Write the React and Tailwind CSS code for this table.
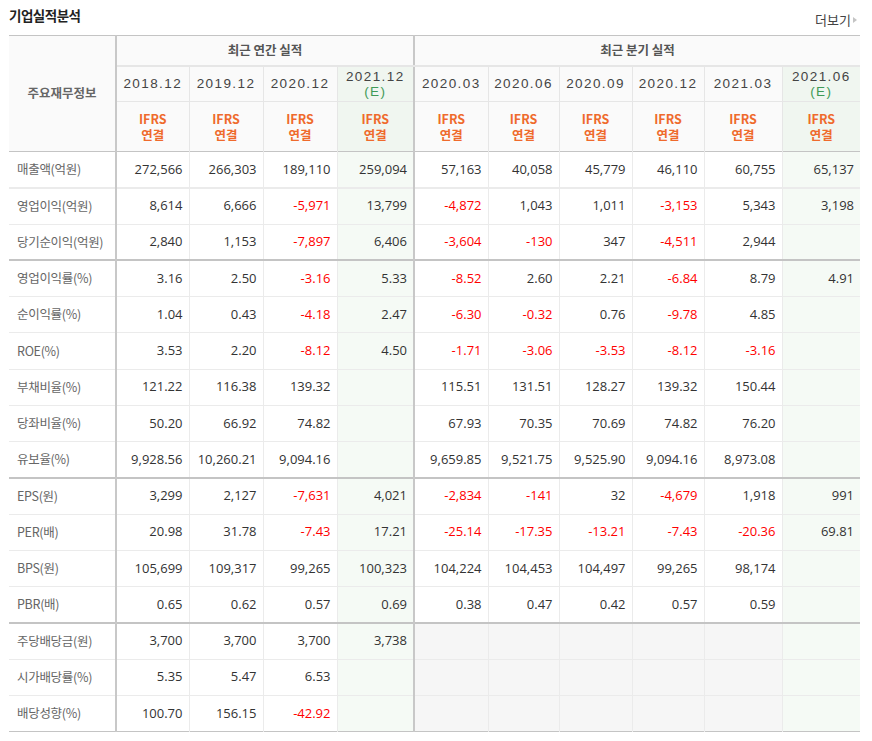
import React from 'react';

const annual = ['2018.12', '2019.12', '2020.12'];
const quarters = ['2020.03', '2020.06', '2020.09', '2020.12', '2021.03'];

// 10 data columns: 4 annual (last is estimate), 6 quarterly (last is estimate)
const rows = [
  ['매출액(억원)', ['272,566', '266,303', '189,110', '259,094', '57,163', '40,058', '45,779', '46,110', '60,755', '65,137']],
  ['영업이익(억원)', ['8,614', '6,666', '-5,971', '13,799', '-4,872', '1,043', '1,011', '-3,153', '5,343', '3,198']],
  ['당기순이익(억원)', ['2,840', '1,153', '-7,897', '6,406', '-3,604', '-130', '347', '-4,511', '2,944', '']],
  ['영업이익률(%)', ['3.16', '2.50', '-3.16', '5.33', '-8.52', '2.60', '2.21', '-6.84', '8.79', '4.91']],
  ['순이익률(%)', ['1.04', '0.43', '-4.18', '2.47', '-6.30', '-0.32', '0.76', '-9.78', '4.85', '']],
  ['ROE(%)', ['3.53', '2.20', '-8.12', '4.50', '-1.71', '-3.06', '-3.53', '-8.12', '-3.16', '']],
  ['부채비율(%)', ['121.22', '116.38', '139.32', '', '115.51', '131.51', '128.27', '139.32', '150.44', '']],
  ['당좌비율(%)', ['50.20', '66.92', '74.82', '', '67.93', '70.35', '70.69', '74.82', '76.20', '']],
  ['유보율(%)', ['9,928.56', '10,260.21', '9,094.16', '', '9,659.85', '9,521.75', '9,525.90', '9,094.16', '8,973.08', '']],
  ['EPS(원)', ['3,299', '2,127', '-7,631', '4,021', '-2,834', '-141', '32', '-4,679', '1,918', '991']],
  ['PER(배)', ['20.98', '31.78', '-7.43', '17.21', '-25.14', '-17.35', '-13.21', '-7.43', '-20.36', '69.81']],
  ['BPS(원)', ['105,699', '109,317', '99,265', '100,323', '104,224', '104,453', '104,497', '99,265', '98,174', '']],
  ['PBR(배)', ['0.65', '0.62', '0.57', '0.69', '0.38', '0.47', '0.42', '0.57', '0.59', '']],
  ['주당배당금(원)', ['3,700', '3,700', '3,700', '3,738', null, null, null, null, null, '']],
  ['시가배당률(%)', ['5.35', '5.47', '6.53', '', null, null, null, null, null, '']],
  ['배당성향(%)', ['100.70', '156.15', '-42.92', '', null, null, null, null, null, '']],
];

const colWidths = [107, 73, 74, 74, 77, 74, 71, 73, 72, 78, 78];

function rowBorder(i) {
  if (i === 0) return 'border-b-2 border-b-[#ebebeb]';
  if (i === 2 || i === 8 || i === 12) return 'border-b-2 border-b-[#c4c4c4]';
  if (i === rows.length - 1) return 'border-b border-b-[#c4c4c4]';
  return 'border-b border-b-[#ebebeb]';
}

function Ifrs() {
  return (
    <div className="text-[12.5px] font-bold leading-[16px] text-[#ef6a2c]">
      IFRS
      <br />
      연결
    </div>
  );
}

function YearCell({ label, estimate }) {
  if (estimate) {
    return (
      <th className="h-[36px] bg-[#f0f6f0] p-0 align-middle font-normal">
        <div className="font-['Liberation_Sans',sans-serif] text-[13.5px] leading-[15px] tracking-[1.4px] text-[#444]">
          {label}
          <br />
          <span className="text-[#3f9a57]">(E)</span>
        </div>
      </th>
    );
  }
  return (
    <th className="h-[36px] border-r border-[#e6e6e6] p-0 align-middle font-['Liberation_Sans',sans-serif] text-[13.5px] font-normal tracking-[1.4px] text-[#444]">
      {label}
    </th>
  );
}

export default function App() {
  return (
    <div className="w-[872px] bg-white pl-[9px] font-['Noto_Sans_CJK_KR',sans-serif] text-[#333]">
      <div className="flex h-[35px] w-[851px] items-start justify-between">
        <h2 className="mt-[5px] text-[13.5px] font-bold tracking-[-0.5px] text-[#222]">기업실적분석</h2>
        <a className="mt-[10px] mr-[3px] flex items-center gap-[2px] text-[13px] text-[#444]">
          더보기
          <span className="inline-block h-0 w-0 border-y-[3.5px] border-l-[4px] border-y-transparent border-l-[#c4c4c4]" />
        </a>
      </div>

      <table className="w-[851px] table-fixed border-collapse border-t border-t-[#c4c4c4]">
        <colgroup>
          {colWidths.map((w, i) => (
            <col key={i} style={{ width: w }} />
          ))}
        </colgroup>
        <thead className="bg-[#fafafa]">
          <tr>
            <th
              rowSpan={3}
              className="border-r-2 border-b border-r-[#c8c8c8] border-b-[#c4c4c4] text-[12.5px] font-bold text-[#666]"
            >
              주요재무정보
            </th>
            <th
              colSpan={4}
              className="h-[30px] border-r-2 border-b-2 border-r-[#c8c8c8] border-b-[#e6e6e6] text-[12.5px] font-bold text-[#555]"
            >
              최근 연간 실적
            </th>
            <th colSpan={6} className="h-[30px] border-b-2 border-b-[#e6e6e6] text-[12.5px] font-bold text-[#555]">
              최근 분기 실적
            </th>
          </tr>
          <tr className="border-b border-b-[#e6e6e6]">
            {annual.map((y) => (
              <YearCell key={y} label={y} />
            ))}
            <th className="h-[36px] border-r-2 border-r-[#c8c8c8] bg-[#f0f6f0] p-0 align-middle font-normal">
              <div className="font-['Liberation_Sans',sans-serif] text-[13.5px] leading-[15px] tracking-[1.4px] text-[#444]">
                2021.12
                <br />
                <span className="text-[#3f9a57]">(E)</span>
              </div>
            </th>
            {quarters.map((y) => (
              <YearCell key={y} label={y} />
            ))}
            <YearCell label="2021.06" estimate />
          </tr>
          <tr className="border-b border-b-[#c4c4c4]">
            {Array.from({ length: 10 }).map((_, i) => (
              <th
                key={i}
                className={`h-[50px] p-0 align-middle ${
                  i === 3
                    ? 'border-r-2 border-r-[#c8c8c8] bg-[#f0f6f0]'
                    : i === 9
                    ? 'bg-[#f0f6f0]'
                    : 'border-r border-r-[#e6e6e6]'
                }`}
              >
                <Ifrs />
              </th>
            ))}
          </tr>
        </thead>
        <tbody>
          {rows.map(([label, vals], i) => (
            <tr key={label} className={rowBorder(i)}>
              <td className="h-[36.25px] border-r-2 border-r-[#c8c8c8] pl-[8px] text-left text-[12.5px] tracking-[-0.3px] text-[#666]">
                {label}
              </td>
              {vals.map((v, j) => {
                const est = j === 3 || j === 9;
                const bg = est ? 'bg-[#f5faf5]' : v === null ? 'bg-[#f6f6f6]' : 'bg-white';
                const border =
                  j === 3
                    ? 'border-r-2 border-r-[#c8c8c8]'
                    : j === 9
                    ? ''
                    : 'border-r border-r-[#ebebeb]';
                const neg = v && v.startsWith('-');
                return (
                  <td
                    key={j}
                    className={`h-[36.25px] pr-[6px] text-right font-['Open_Sans',sans-serif] text-[13px] ${bg} ${border} ${
                      neg ? 'text-[#ff0000]' : 'text-[#333]'
                    }`}
                  >
                    {v}
                  </td>
                );
              })}
            </tr>
          ))}
        </tbody>
      </table>
    </div>
  );
}
